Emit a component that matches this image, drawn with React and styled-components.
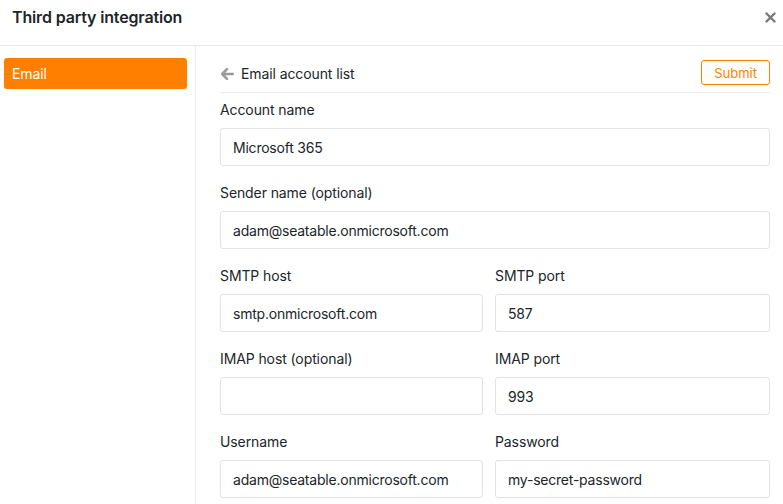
import React from 'react';
import styled, { createGlobalStyle } from 'styled-components';

const GlobalStyle = createGlobalStyle`
  html, body {
    margin: 0;
    padding: 0;
    background: #ffffff;
  }
  body {
    font-family: Inter, 'Noto Sans', 'Liberation Sans', sans-serif;
    color: #212529;
    font-size: 14px;
    letter-spacing: -0.1px;
  }
  * {
    box-sizing: border-box;
  }
`;

const Dialog = styled.div`
  width: 783px;
  height: 504px;
  display: flex;
  flex-direction: column;
  overflow: hidden;
  background: #fff;
`;

const Header = styled.div`
  height: 46px;
  flex-shrink: 0;
  display: flex;
  align-items: center;
  justify-content: space-between;
  padding: 0 7px 12px 12px;
  border-bottom: 1px solid #e9e9e9;
`;

const Title = styled.div`
  font-size: 16px;
  font-weight: 600;
  letter-spacing: -0.15px;
  color: #212529;
`;

const CloseButton = styled.button`
  border: none;
  background: none;
  padding: 0;
  width: 12px;
  height: 12px;
  margin-top: 2px;
  display: flex;
  align-items: center;
  justify-content: center;
  cursor: pointer;
`;

const Body = styled.div`
  flex: 1;
  display: flex;
  min-height: 0;
`;

const Sidebar = styled.div`
  width: 196px;
  flex-shrink: 0;
  border-right: 1px solid #ececec;
  padding: 12px 8px 0 4px;
`;

const NavItem = styled.div`
  height: 31px;
  display: flex;
  align-items: center;
  padding-left: 8px;
  border-radius: 3px;
  font-size: 14px;
  color: ${(p) => (p.active ? '#ffffff' : '#212529')};
  background: ${(p) => (p.active ? '#ff8000' : 'transparent')};
`;

const Main = styled.div`
  flex: 1;
  padding: 0 13px 0 24px;
`;

const TopRow = styled.div`
  display: flex;
  align-items: center;
  justify-content: space-between;
  padding: 14px 0 7px;
  border-bottom: 1px solid #ececec;
  margin-bottom: 6px;
`;

const BackLink = styled.div`
  display: flex;
  align-items: center;
  gap: 7px;
  font-size: 14px;
  color: #212529;
  padding-top: 2px;
`;

const SubmitButton = styled.button`
  height: 25px;
  padding: 0 12px;
  border: 1px solid #ff8000;
  border-radius: 3px;
  background: #fff;
  color: #ff8000;
  font-family: inherit;
  font-size: 13px;
  letter-spacing: 0;
`;

const Row = styled.div`
  display: grid;
  grid-template-columns: ${(p) => (p.split ? '263px 1fr' : '1fr')};
  column-gap: 12px;
`;

const Field = styled.div`
  margin-bottom: 16px;
`;

const Label = styled.div`
  font-size: 14px;
  line-height: 21px;
  margin-bottom: 8px;
  color: #212529;
`;

const Input = styled.div`
  height: 38px;
  display: flex;
  align-items: center;
  padding: 0 12px;
  border: 1px solid #e3e3e6;
  border-radius: 3px;
  font-size: 14px;
  letter-spacing: -0.22px;
  color: #212529;
  background: #fff;
  white-space: nowrap;
  overflow: hidden;
`;

const BackArrow = () => (
  <svg width="14" height="14" viewBox="0 0 14 14">
    <path
      d="M12.8 7H2.6M7 2.2L2.2 7 7 11.8"
      fill="none"
      stroke="#9a9a9a"
      strokeWidth="2.6"
      strokeLinecap="round"
      strokeLinejoin="round"
    />
  </svg>
);

const CloseIcon = () => (
  <svg width="11" height="11" viewBox="0 0 11 11">
    <path d="M1.5 1.5l8 8M9.5 1.5l-8 8" stroke="#787878" strokeWidth="2.4" strokeLinecap="round" />
  </svg>
);

const rows = [
  [{ label: 'Account name', value: 'Microsoft 365' }],
  [{ label: 'Sender name (optional)', value: 'adam@seatable.onmicrosoft.com' }],
  [
    { label: 'SMTP host', value: 'smtp.onmicrosoft.com' },
    { label: 'SMTP port', value: '587' },
  ],
  [
    { label: 'IMAP host (optional)', value: '' },
    { label: 'IMAP port', value: '993' },
  ],
  [
    { label: 'Username', value: 'adam@seatable.onmicrosoft.com' },
    { label: 'Password', value: 'my-secret-password' },
  ],
];

const App = () => {
  return (
    <>
      <GlobalStyle />
      <Dialog>
        <Header>
          <Title>Third party integration</Title>
          <CloseButton>
            <CloseIcon />
          </CloseButton>
        </Header>
        <Body>
          <Sidebar>
            <NavItem active>Email</NavItem>
          </Sidebar>
          <Main>
            <TopRow>
              <BackLink>
                <BackArrow />
                Email account list
              </BackLink>
              <SubmitButton>Submit</SubmitButton>
            </TopRow>
            {rows.map((row, i) => (
              <Row key={i} split={row.length > 1}>
                {row.map((f) => (
                  <Field key={f.label}>
                    <Label>{f.label}</Label>
                    <Input>{f.value}</Input>
                  </Field>
                ))}
              </Row>
            ))}
          </Main>
        </Body>
      </Dialog>
    </>
  );
};

export default App;
